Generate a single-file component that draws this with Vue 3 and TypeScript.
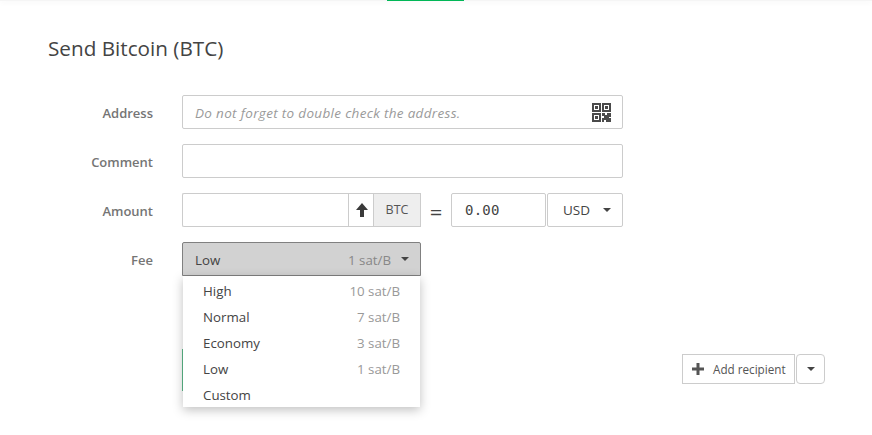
<script setup lang="ts">
interface Fee { name: string; rate?: string }
const fees: Fee[] = [
  { name: 'High', rate: '10 sat/B' },
  { name: 'Normal', rate: '7 sat/B' },
  { name: 'Economy', rate: '3 sat/B' },
  { name: 'Low', rate: '1 sat/B' },
  { name: 'Custom' },
]
</script>

<template>
  <div class="page">
    <div class="topbar"><span class="tab-mark"></span></div>
    <main class="content">
      <h1 class="title">Send Bitcoin (BTC)</h1>
      <form class="form" @submit.prevent>
        <div class="row">
          <label class="label">Address</label>
          <div class="field address">
            <span class="placeholder">Do not forget to double check the address.</span>
            <svg class="qr" width="19" height="19" viewBox="0 0 19 19" fill="#4a4a4a">
              <path d="M0 0h9v9H0zM2 2v5h5V2z" fill-rule="evenodd" />
              <path d="M3 3h3v3H3z" />
              <path d="M10 0h9v9h-9zM12 2v5h5V2z" fill-rule="evenodd" />
              <path d="M13 3h3v3h-3z" />
              <path d="M0 10h9v9H0zM2 12v5h5v-5z" fill-rule="evenodd" />
              <path d="M3 13h3v3H3z" />
              <path d="M10 10h3v2h2v-2h4v4h-2v1h2v4h-5v-2h-2v2h-2v-4h2v-2h-2z" />
            </svg>
          </div>
        </div>
        <div class="row">
          <label class="label">Comment</label>
          <div class="field"></div>
        </div>
        <div class="row">
          <label class="label">Amount</label>
          <div class="amount">
            <div class="amount-input"></div>
            <div class="arrow-cell">
              <svg width="12" height="14" viewBox="0 0 12 14" fill="#3a3a3a">
                <path d="M6 0l6 7H8v7H4V7H0z" />
              </svg>
            </div>
            <div class="unit">BTC</div>
            <div class="equals">=</div>
            <div class="fiat">0.00</div>
            <div class="currency"><span>USD</span><i class="caret"></i></div>
          </div>
        </div>
        <div class="row">
          <label class="label">Fee</label>
          <div class="fee-wrap">
            <div class="fee-select">
              <span>Low</span>
              <span class="fee-right"><span class="rate">1 sat/B</span><i class="caret"></i></span>
            </div>
            <ul class="menu">
              <li v-for="fee in fees" :key="fee.name" class="menu-item">
                <span>{{ fee.name }}</span>
                <span v-if="fee.rate" class="rate">{{ fee.rate }}</span>
              </li>
            </ul>
          </div>
        </div>
        <div class="actions">
          <button type="button" class="send">Send</button>
          <div class="recipient">
            <button type="button" class="add">
              <svg width="12" height="12" viewBox="0 0 12 12" fill="#555">
                <path d="M4.500 0h3v4.500H12v3H7.500V12h-3V7.500H0v-3h4.500z" />
              </svg>
              <span>Add recipient</span>
            </button>
            <button type="button" class="more"><i class="caret"></i></button>
          </div>
        </div>
      </form>
    </main>
  </div>
</template>

<style>
html, body { margin: 0; background: #fff; }
</style>

<style scoped>
.page {
  width: 872px;
  height: 435px;
  overflow: hidden;
  font-family: "Open Sans", sans-serif;
  font-size: 14px;
  color: #444;
  background: #fff;
}
.topbar {
  height: 1px;
  display: flex;
  justify-content: center;
  background: #f5f5f5;
  box-shadow: 0 1px 5px rgba(0, 0, 0, 0.1);
}
.tab-mark {
  width: 77px;
  height: 1px;
  margin-left: -21px;
  background: #01b757;
}
.content { padding: 0 47px 0 48px; }
.title {
  margin: 0;
  padding-top: 34px;
  height: 60px;
  font-size: 20.700px;
  line-height: 27px;
  font-weight: 400;
  color: #444;
}
.form { display: flex; flex-direction: column; }
.row {
  display: flex;
  align-items: center;
  height: 34px;
  margin-bottom: 15px;
}
.label {
  width: 105px;
  margin-right: 29px;
  padding-top: 2px;
  text-align: right;
  font-weight: 600;
  font-size: 13px;
  color: #757575;
}
.field {
  width: 441px;
  height: 34px;
  box-sizing: border-box;
  border: 1px solid #ccc;
  border-radius: 2px;
  background: #fff;
}
.address {
  display: flex;
  align-items: center;
  justify-content: space-between;
  padding: 0 11px 0 12px;
}
.placeholder {
  padding-top: 1px;
  font-style: italic;
  font-size: 13.500px;
  letter-spacing: 0.32px;
  color: #9a9a9a;
}
.amount {
  display: flex;
  align-items: center;
  width: 441px;
  height: 34px;
}
.amount-input {
  width: 166px;
  height: 34px;
  box-sizing: border-box;
  border: 1px solid #ccc;
  border-right: 0;
  border-radius: 2px 0 0 2px;
}
.arrow-cell {
  width: 25px;
  height: 34px;
  box-sizing: border-box;
  border: 1px solid #ccc;
  border-right: 0;
  padding-left: 2px;
  display: flex;
  align-items: center;
  justify-content: center;
}
.unit {
  width: 48px;
  height: 34px;
  box-sizing: border-box;
  border: 1px solid #ccc;
  background: #eee;
  font-size: 12.500px;
  line-height: 32px;
  text-align: center;
  color: #555;
}
.equals {
  width: 30px;
  padding-top: 1px;
  text-align: center;
  font-size: 22px;
  line-height: 24px;
  color: #444;
}
.fiat {
  width: 95px;
  height: 34px;
  box-sizing: border-box;
  border: 1px solid #ccc;
  border-radius: 2px;
  padding-left: 13px;
  font-family: "DejaVu Sans Mono", monospace;
  font-size: 14px;
  letter-spacing: 0.2px;
  line-height: 32px;
  color: #444;
}
.currency {
  width: 76px;
  height: 34px;
  margin-left: 1px;
  box-sizing: border-box;
  border: 1px solid #ccc;
  border-radius: 2px;
  padding: 0 11px 0 15px;
  display: flex;
  align-items: center;
  justify-content: space-between;
  font-size: 13.500px;
}
.caret {
  display: inline-block;
  width: 0;
  height: 0;
  border-left: 4px solid transparent;
  border-right: 4px solid transparent;
  border-top: 4px solid #444;
}
.fee-wrap { position: relative; }
.fee-select {
  width: 239px;
  height: 34px;
  box-sizing: border-box;
  border: 1px solid #808080;
  border-radius: 2px 2px 0 0;
  background: #d2d2d2;
  padding: 2px 11px 0 12px;
  display: flex;
  align-items: center;
  justify-content: space-between;
  font-size: 13.300px;
}
.fee-right { display: flex; align-items: center; gap: 10px; }
.fee-right .caret { margin-bottom: 2px; }
.rate { color: #999; font-size: 13.300px; }
.fee-select .rate { color: #888; }
.menu {
  position: absolute;
  z-index: 5;
  top: 34px;
  left: 1px;
  width: 237px;
  box-sizing: border-box;
  margin: 0;
  padding: 2px 0 0;
  height: 131px;
  overflow: hidden;
  list-style: none;
  background: #fff;
  box-shadow: 0 3px 10px rgba(0, 0, 0, 0.25);
}
.menu-item {
  height: 26px;
  padding: 0 20px;
  display: flex;
  align-items: center;
  justify-content: space-between;
  font-size: 13.300px;
  color: #444;
}
.actions {
  display: flex;
  align-items: center;
  justify-content: space-between;
  margin: 58px 0 0 134px;
}
.send {
  width: 200px;
  height: 42px;
  border: 0;
  background: #5cba8a;
  color: #fff;
  font: inherit;
}
.recipient { display: flex; gap: 1px; margin-top: -2px; }
.add {
  width: 113px;
  height: 30px;
  box-sizing: border-box;
  border: 1px solid #ccc;
  background: #fff;
  font-family: inherit;
  font-size: 11.700px;
  color: #555;
  display: flex;
  align-items: center;
  gap: 9px;
  padding: 0 0 0 9px;
}
.more {
  width: 29px;
  height: 30px;
  box-sizing: border-box;
  border: 1px solid #ccc;
  border-radius: 4px;
  background: #fff;
  padding: 0;
  display: flex;
  align-items: center;
  justify-content: center;
}
</style>
